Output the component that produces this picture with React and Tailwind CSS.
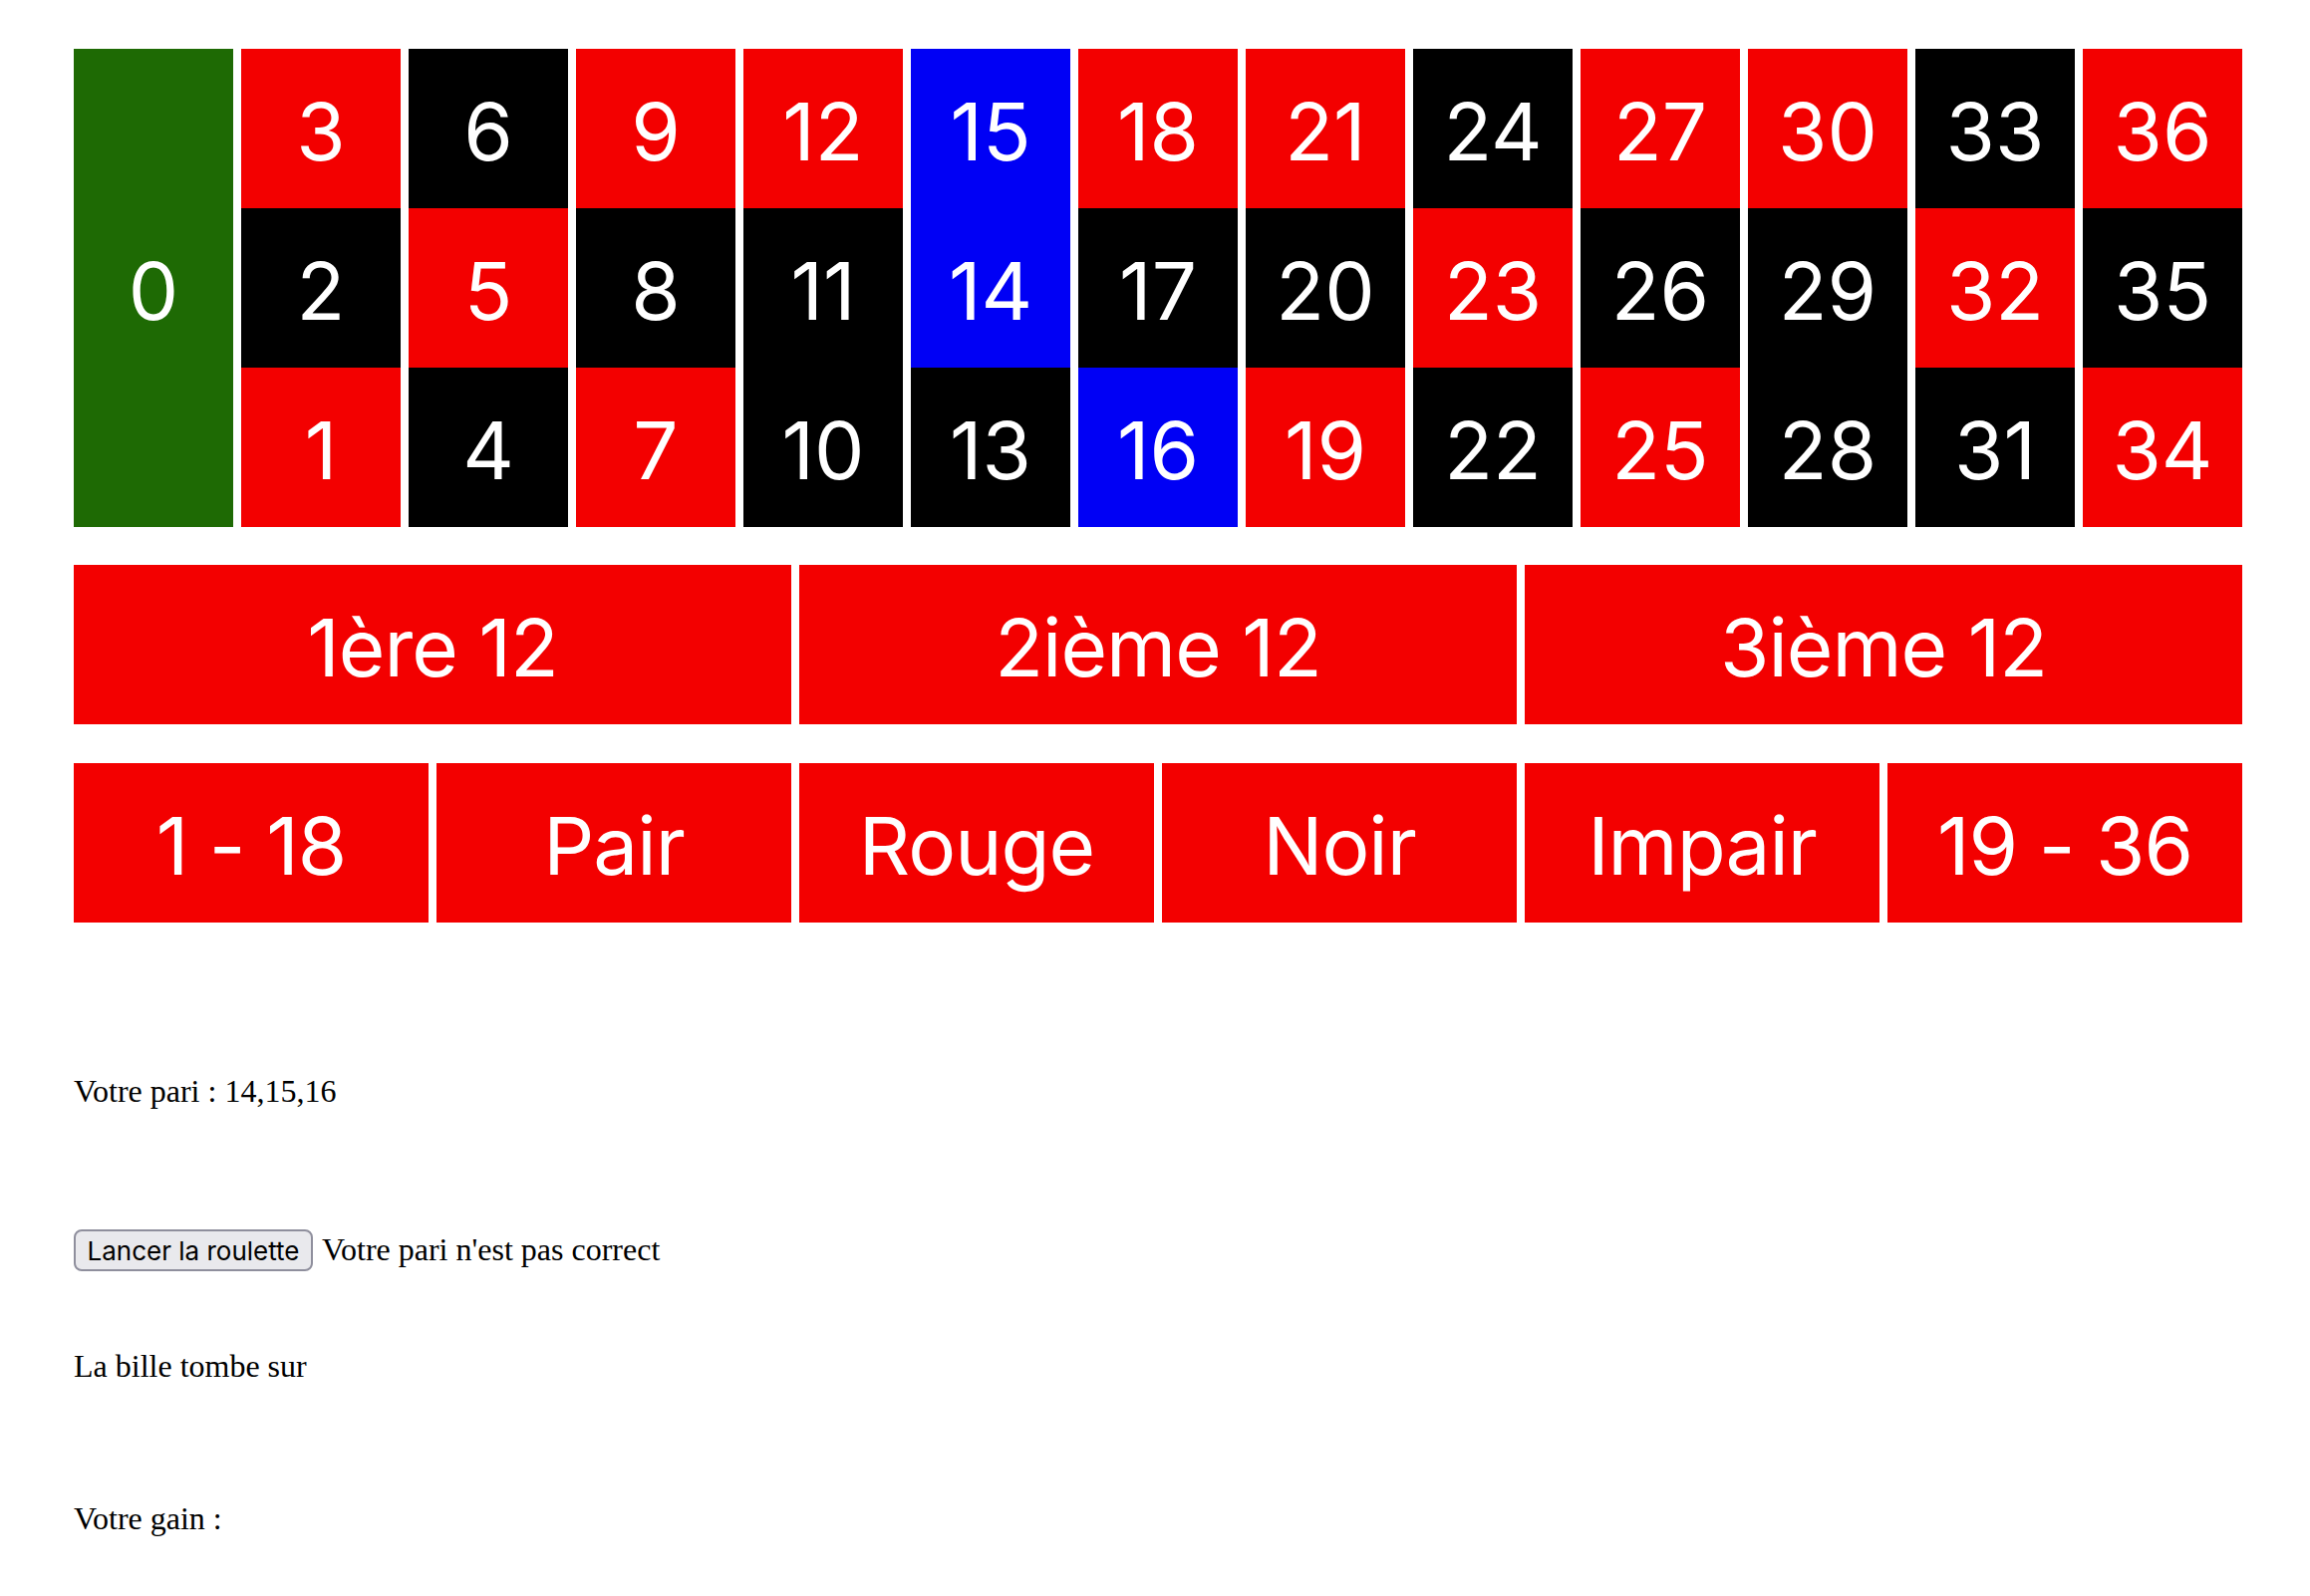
import React from "react";

const RED = new Set([1, 3, 5, 7, 9, 12, 14, 16, 18, 19, 21, 23, 25, 27, 30, 32, 34, 36]);
const SELECTED = new Set([14, 15, 16]);

function cellColor(n) {
  if (SELECTED.has(n)) return "bg-[#0000f5]";
  return RED.has(n) ? "bg-[#f30000]" : "bg-black";
}

function Cell({ n }) {
  return (
    <div className={`${cellColor(n)} flex items-center justify-center pt-[6px] text-white text-[80px] leading-none`}>
      {n}
    </div>
  );
}

function Box({ children }) {
  return (
    <div className="bg-[#f30000] h-[160px] flex items-center justify-center pt-[6px] text-white text-[80px] leading-none tracking-[-1px]">
      {children}
    </div>
  );
}

export default function App() {
  const rows = [0, 1, 2].map((r) => Array.from({ length: 12 }, (_, c) => (c + 1) * 3 - r));
  return (
    <div className="min-h-screen bg-white pl-[74px] pt-[49px] pb-[60px]">
      <div className="w-[2176px] font-['Inter',sans-serif]">
        <div className="grid grid-cols-[repeat(13,160px)] grid-rows-[repeat(3,160px)] gap-x-[8px]">
          <div className="row-span-3 col-start-1 row-start-1 bg-[#1e6a04] flex items-center justify-center pt-[6px] text-white text-[80px] leading-none">
            0
          </div>
          {rows.map((row, ri) =>
            row.map((n) => <Cell key={`${ri}-${n}`} n={n} />)
          )}
        </div>
        <div className="mt-[38px] grid grid-cols-3 gap-x-[8px]">
          <Box>1ère 12</Box>
          <Box>2ième 12</Box>
          <Box>3ième 12</Box>
        </div>
        <div className="mt-[39px] grid grid-cols-6 gap-x-[8px]">
          <Box>1 - 18</Box>
          <Box>Pair</Box>
          <Box>Rouge</Box>
          <Box>Noir</Box>
          <Box>Impair</Box>
          <Box>19 - 36</Box>
        </div>
      </div>

      <div className="font-['Liberation_Serif',serif] text-[32px] leading-[37px] text-black">
        <p className="mt-[151px]">Votre pari : 14,15,16</p>
        <div className="mt-[120px] flex items-baseline">
          <button className="h-[42px] w-[240px] flex items-center justify-center rounded-[8px] border-2 border-[#8f8f9d] bg-[#e9e9ed] font-['Inter',sans-serif] text-[26px] text-black">
            Lancer la roulette
          </button>
          <span className="ml-[9px]">Votre pari n'est pas correct</span>
        </div>
        <p className="mt-[77px]">La bille tombe sur</p>
        <p className="mt-[116px]">Votre gain :</p>
      </div>
    </div>
  );
}
